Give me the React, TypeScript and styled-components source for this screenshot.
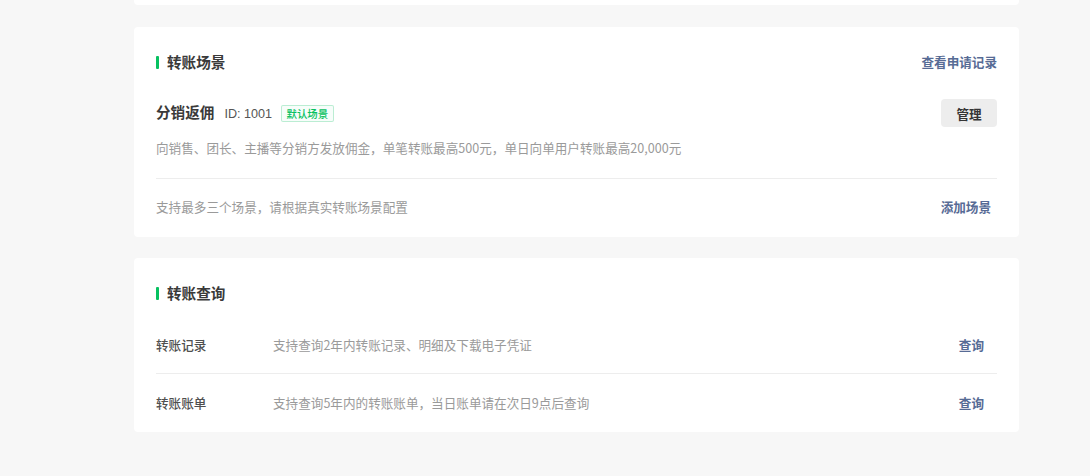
import React from "react";
import styled, { createGlobalStyle } from "styled-components";

const Global = createGlobalStyle`
  html, body { margin: 0; padding: 0; background: #f7f7f7; }
  body {
    font-family: "Noto Sans CJK SC", "Noto Sans", sans-serif;
    color: #353535;
    -webkit-font-smoothing: antialiased;
  }
`;

const Page = styled.div`
  display: flex;
  flex-direction: column;
  width: 885px;
  margin-left: 134px;
  padding-bottom: 44px;
`;

const Card = styled.section<{ $stub?: boolean; $gap?: number }>`
  background: #fff;
  border-radius: ${(p) => (p.$stub ? "0 0 4px 4px" : "4px")};
  height: ${(p) => (p.$stub ? "5px" : "auto")};
  margin-top: ${(p) => p.$gap ?? 0}px;
  padding: ${(p) => (p.$stub ? "0" : "25px 22px 20px")};
  box-sizing: border-box;
  display: flex;
  flex-direction: column;
`;

const Header = styled.div`
  display: flex;
  align-items: center;
  justify-content: space-between;
  height: 20px;
`;

const Title = styled.h2`
  display: flex;
  align-items: center;
  gap: 8px;
  margin: 0;
  font-size: 14.6px;
  font-weight: 700;
  color: #3a3a3a;
  line-height: 20px;
  &::before {
    content: "";
    width: 3px;
    height: 13px;
    border-radius: 1px;
    background: #07c160;
  }
`;

const Link = styled.a<{ $mr?: number }>`
  font-size: 12.6px;
  font-weight: 600;
  color: #576b95;
  line-height: 20px;
  text-decoration: none;
  cursor: pointer;
  margin-right: ${(p) => p.$mr ?? 0}px;
`;

const SceneRow = styled.div`
  display: flex;
  align-items: center;
  justify-content: space-between;
  margin-top: 27px;
  height: 28px;
`;

const SceneInfo = styled.div`
  display: flex;
  align-items: baseline;
`;

const SceneName = styled.span`
  font-size: 14.6px;
  font-weight: 700;
  color: #3a3a3a;
  line-height: 20px;
  margin-right: 10px;
`;

const SceneId = styled.span`
  font-family: "Liberation Sans", "Noto Sans CJK SC", sans-serif;
  font-size: 12.6px;
  line-height: 20px;
  color: #555;
  margin-right: 9px;
`;

const Tag = styled.span`
  font-size: 10.4px;
  color: #07c160;
  background: rgba(7, 193, 96, 0.03);
  border: 1px solid rgba(7, 193, 96, 0.25);
  border-radius: 2px;
  padding: 0 4.5px;
  line-height: 15px;
  font-weight: 500;
`;

const Button = styled.button`
  width: 56px;
  height: 28px;
  border: none;
  border-radius: 4px;
  background: #ededed;
  color: #353535;
  font-family: inherit;
  font-size: 12.6px;
  font-weight: 700;
  cursor: pointer;
  padding: 0;
`;

const Desc = styled.p`
  margin: 11px 0 0;
  font-size: 12.6px;
  line-height: 20px;
  color: #9a9a9a;
`;

const Divider = styled.hr`
  border: none;
  height: 1px;
  background: #ededed;
  margin: 20px 0 18px;
`;

const Footer = styled.div`
  display: flex;
  align-items: center;
  justify-content: space-between;
  font-size: 12.6px;
  line-height: 20px;
  color: #9a9a9a;
`;

const QueryCard = styled(Card)`
  padding-bottom: 1px;
`;

const List = styled.div`
  margin-top: 13px;
  display: flex;
  flex-direction: column;
`;

const QueryRow = styled.div`
  display: grid;
  grid-template-columns: 117px 1fr auto;
  align-items: center;
  height: 57px;
  box-sizing: border-box;
  & + & {
    border-top: 1px solid #ededed;
    height: 58px;
  }
`;

const RowLabel = styled.span`
  font-size: 12.6px;
  font-weight: 500;
  color: #4f4f4f;
`;

const RowDesc = styled.span`
  font-size: 12.6px;
  color: #9a9a9a;
`;

const queries = [
  { label: "转账记录", desc: "支持查询2年内转账记录、明细及下载电子凭证" },
  { label: "转账账单", desc: "支持查询5年内的转账账单，当日账单请在次日9点后查询" },
];

export default function App() {
  return (
    <>
      <Global />
      <Page>
        <Card $stub />
        <Card $gap={22}>
          <Header>
            <Title>转账场景</Title>
            <Link>查看申请记录</Link>
          </Header>
          <SceneRow>
            <SceneInfo>
              <SceneName>分销返佣</SceneName>
              <SceneId>ID: 1001</SceneId>
              <Tag>默认场景</Tag>
            </SceneInfo>
            <Button>管理</Button>
          </SceneRow>
          <Desc>向销售、团长、主播等分销方发放佣金，单笔转账最高500元，单日向单用户转账最高20,000元</Desc>
          <Divider />
          <Footer>
            <span>支持最多三个场景，请根据真实转账场景配置</span>
            <Link $mr={6}>添加场景</Link>
          </Footer>
        </Card>
        <QueryCard $gap={21}>
          <Header>
            <Title>转账查询</Title>
          </Header>
          <List>
            {queries.map((q) => (
              <QueryRow key={q.label}>
                <RowLabel>{q.label}</RowLabel>
                <RowDesc>{q.desc}</RowDesc>
                <Link $mr={13}>查询</Link>
              </QueryRow>
            ))}
          </List>
        </QueryCard>
      </Page>
    </>
  );
}
